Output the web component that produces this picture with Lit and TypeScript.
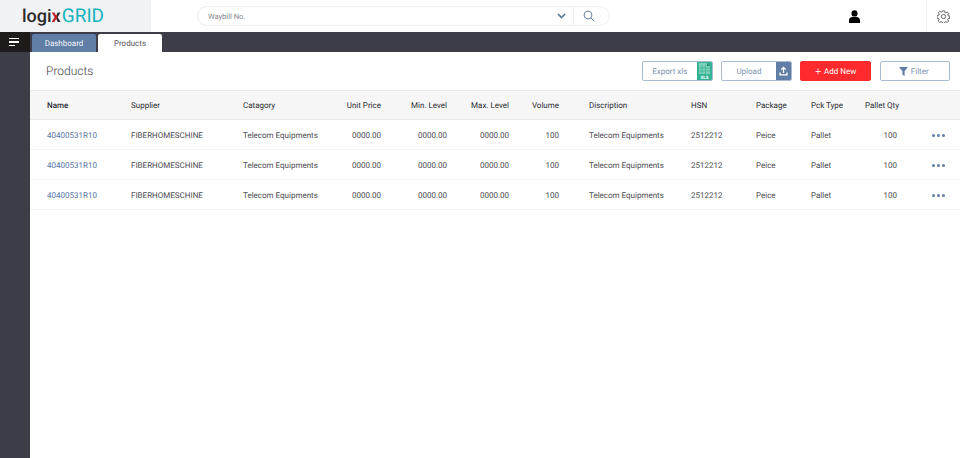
import { LitElement, html, css, svg } from 'lit';
import { customElement } from 'lit/decorators.js';

const columns = [
  { label: 'Name', key: 'name' },
  { label: 'Supplier', key: 'supplier' },
  { label: 'Catagory', key: 'category' },
  { label: 'Unit Price', key: 'price', end: true },
  { label: 'Min. Level', key: 'min', end: true },
  { label: 'Max. Level', key: 'max', end: true },
  { label: 'Volume', key: 'volume', end: true },
  { label: 'Discription', key: 'description', pad: true },
  { label: 'HSN', key: 'hsn' },
  { label: 'Package', key: 'pack' },
  { label: 'Pck Type', key: 'type' },
  { label: 'Pallet Qty', key: 'qty', qty: true },
];

const product: Record<string, string> = {
  name: '40400531R10',
  supplier: 'FIBERHOMESCHINE',
  category: 'Telecom Equipments',
  price: '0000.00',
  min: '0000.00',
  max: '0000.00',
  volume: '100',
  description: 'Telecom Equipments',
  hsn: '2512212',
  pack: 'Peice',
  type: 'Pallet',
  qty: '100',
};

const rows = [product, product, product];

const cellClass = (c: any) =>
  `cell ${c.end ? 'cell--end' : ''} ${c.pad ? 'cell--pad' : ''} ${c.qty ? 'cell--qty' : ''}`;

const gear = svg`<g fill="none" stroke="#44454a" stroke-width="1"><circle cx="8" cy="8" r="2.6"/><path d="M6.8 1h2.4l.4 2 1.3.6 1.8-1.1 1.7 1.7-1.1 1.8.6 1.3 2 .4v2.4l-2 .4-.6 1.3 1.1 1.8-1.7 1.7-1.8-1.1-1.3.6-.4 2H6.8l-.4-2-1.3-.6-1.8 1.1-1.7-1.7 1.1-1.8-.6-1.3-2-.4V6.8l2-.4.6-1.3-1.1-1.8 1.7-1.7 1.8 1.1 1.3-.6z"/></g>`;

@customElement('app-root')
export default class App extends LitElement {
  static override styles = css`
    :host {
      display: block;
      width: 960px;
      height: 458px;
      overflow: hidden;
      background: #fff;
      font-family: Roboto, 'Liberation Sans', sans-serif;
      text-rendering: geometricPrecision;
      color: #33343a;
    }
    .header {
      display: flex;
      align-items: center;
      height: 32px;
    }
    .logo {
      display: flex;
      align-items: baseline;
      flex: none;
      width: 151px;
      height: 32px;
      padding: 4px 0 0 22px;
      box-sizing: border-box;
      background: #f1f2f4;
      font-size: 18px;
      line-height: 24px;
    }
    .logo__logi {
      font-weight: 500;
      color: #2a2a2c;
    }
    .logo__x {
      font-weight: 700;
      margin-right: 1px;
      background: linear-gradient(90deg, #c0202a 55%, #2a2a2c 55%);
      -webkit-background-clip: text;
      -webkit-text-fill-color: transparent;
    }
    .logo__grid {
      font-size: 19px;
      font-weight: 400;
      color: #15b3bd;
    }
    .search {
      display: flex;
      align-items: center;
      flex: none;
      width: 413px;
      height: 20px;
      margin-left: 46px;
      box-sizing: border-box;
      border: 1px solid #eceef1;
      border-radius: 10px;
      padding-left: 10px;
      font-size: 7.5px;
      color: #85868c;
    }
    .search__label {
      flex: 1;
    }
    .search__chevron {
      margin-right: 7px;
    }
    .search__icon {
      display: flex;
      align-items: center;
      height: 100%;
      border-left: 1px solid #eceef1;
      padding: 0 14px 0 9px;
    }
    .header__user {
      display: flex;
      flex: none;
      margin-left: 239px;
    }
    .header__gear {
      display: flex;
      align-items: center;
      justify-content: center;
      width: 33px;
      height: 32px;
      border-left: 1px solid #eeeff1;
      margin-left: auto;
    }
    .nav {
      display: flex;
      height: 20px;
      background: #3c3d47;
    }
    .nav__menu {
      display: flex;
      flex-direction: column;
      justify-content: center;
      gap: 2px;
      width: 30px;
      padding-left: 9px;
      box-sizing: border-box;
      background: #1f1b1a;
    }
    .nav__menu i {
      display: block;
      width: 10px;
      height: 1.5px;
      background: #fff;
    }
    .nav__menu i:nth-child(3) {
      width: 6px;
    }
    .tabs {
      display: flex;
      align-items: flex-end;
      gap: 2px;
      padding-left: 2px;
    }
    .tab {
      display: flex;
      align-items: center;
      justify-content: center;
      width: 64px;
      height: 18px;
      border-radius: 2px 2px 0 0;
      font-size: 8px;
      background: #607ea6;
      color: #f1f4f8;
    }
    .tab--active {
      background: #fff;
      color: #55565c;
    }
    .body {
      display: flex;
      height: 406px;
    }
    .sidebar {
      width: 30px;
      flex: none;
      background: #3c3d47;
    }
    .main {
      flex: 1;
      min-width: 0;
    }
    .toolbar {
      display: flex;
      align-items: center;
      height: 38px;
      padding: 0 10px 0 16px;
      gap: 8.67px;
    }
    .toolbar__title {
      flex: 1;
      margin: 0;
      font-size: 12px;
      font-weight: 300;
      color: #3c3d47;
    }
    .btn {
      display: flex;
      align-items: center;
      justify-content: center;
      box-sizing: border-box;
      width: 70.5px;
      height: 20px;
      border: 1px solid #a9bbd2;
      border-radius: 2px;
      background: #fff;
      color: #7c94b4;
      font-size: 8px;
      overflow: hidden;
    }
    .btn__label {
      flex: 1;
      text-align: center;
    }
    .btn__side {
      display: flex;
      align-items: center;
      justify-content: center;
      align-self: stretch;
      width: 15px;
      background: #607ea6;
    }
    .btn__side--xls {
      background: #33b295;
    }
    .btn--primary {
      border-color: #ff2a2d;
      background: #ff2a2d;
      color: #fff;
      gap: 3px;
    }
    .btn__plus {
      font-size: 11px;
      font-weight: 300;
      line-height: 1;
    }
    .btn--filter {
      gap: 3px;
      padding-right: 2px;
    }
    .row {
      display: grid;
      grid-template-columns: 84px 112px 90px 48px 66px 62px 50px 132px 65px 55px 54px 34px 1fr;
      align-items: center;
      height: 30px;
      padding: 1px 0 0 17px;
      box-sizing: border-box;
      font-size: 8px;
      border-bottom: 1px solid #f5f5f6;
      color: #4a4b50;
    }
    .row--head {
      padding-top: 0;
      background: #f6f6f6;
      border-top: 1px solid #e9e9eb;
      border-bottom: 1px solid #e9e9eb;
      color: #2b2c30;
    }
    .row--head .cell:first-child {
      font-weight: 500;
    }
    .cell {
      white-space: nowrap;
    }
    .cell--end,
    .cell--qty {
      text-align: right;
    }
    .cell--pad {
      padding-left: 30px;
    }
    .row:not(.row--head) .cell--qty {
      padding-right: 2px;
    }
    .cell--link {
      color: #5676a3;
    }
    .dots {
      display: flex;
      justify-content: flex-end;
      gap: 2px;
      padding-right: 15px;
    }
    .dots i {
      width: 3px;
      height: 3px;
      border-radius: 50%;
      background: #607ea6;
    }
  `;

  override render() {
    return html`
      <div class="header">
        <div class="logo">
          <span class="logo__logi">logi</span><span class="logo__x">x</span><span class="logo__grid">GRID</span>
        </div>
        <div class="search">
          <span class="search__label">Waybill No.</span>
          <svg class="search__chevron" width="9" height="6" viewBox="0 0 9 6"><path d="M1 1l3.5 3.5L8 1" fill="none" stroke="#55779f" stroke-width="1.6"/></svg>
          <span class="search__icon">
            <svg width="12" height="12" viewBox="0 0 12 12" fill="none" stroke="#6a85a9"><circle cx="5" cy="5" r="3.9"/><path d="M8 8l3.4 3.4"/></svg>
          </span>
        </div>
        <div class="header__user">
          <svg width="11" height="13" viewBox="0 0 11 13"><ellipse cx="5.5" cy="3.4" rx="3" ry="3.2"/><path d="M0 13v-2.6C0 8.4 1.6 7.2 3.4 7h4.2C9.4 7.2 11 8.4 11 10.4V13z"/></svg>
        </div>
        <div class="header__gear">
          <svg width="13" height="13" viewBox="0 0 16 16">${gear}</svg>
        </div>
      </div>
      <div class="nav">
        <div class="nav__menu"><i></i><i></i><i></i></div>
        <div class="tabs">
          <div class="tab">Dashboard</div>
          <div class="tab tab--active">Products</div>
        </div>
      </div>
      <div class="body">
        <div class="sidebar"></div>
        <div class="main">
          <div class="toolbar">
            <h1 class="toolbar__title">Products</h1>
            <div class="btn">
              <span class="btn__label">Export xls</span>
              <span class="btn__side btn__side--xls">
                <svg width="13" height="18" viewBox="0 0 13 18"><path d="M1 1h8l3 3v8H1z" fill="#7fd0bb"/><path d="M9 1l3 3H9z" fill="#1f8a70"/><path d="M4 3v9M7.5 3v9M1 6h11M1 9h11" stroke="#33b295" stroke-width=".7"/><text x="6.5" y="16.5" text-anchor="middle" font-size="4.5" font-weight="700" fill="#fff" font-family="Roboto">XLS</text></svg>
              </span>
            </div>
            <div class="btn">
              <span class="btn__label">Upload</span>
              <span class="btn__side">
                <svg width="9" height="10" viewBox="0 0 9 10" fill="none" stroke="#fff" stroke-width="1.3"><path d="M4.5 7V1.5M2.2 3.6l2.3-2.3 2.3 2.3M1 6.5v2.3h7V6.5"/></svg>
              </span>
            </div>
            <div class="btn btn--primary"><span class="btn__plus">+</span> Add New</div>
            <div class="btn btn--filter">
              <svg width="9" height="9" viewBox="0 0 9 9"><path d="M0 0h9L5.6 4.2V9L3.4 7.8V4.2z" fill="#607ea6"/></svg>
              Filter
            </div>
          </div>
          <div class="row row--head">
            ${columns.map((c) => html`<div class=${cellClass(c)}>${c.label}</div>`)}
            <div></div>
          </div>
          ${rows.map(
            (r) => html`
              <div class="row">
                ${columns.map(
                  (c, i) => html`<div class="${cellClass(c)} ${i === 0 ? 'cell--link' : ''}">${r[c.key]}</div>`
                )}
                <div class="dots"><i></i><i></i><i></i></div>
              </div>
            `
          )}
        </div>
      </div>
    `;
  }
}
